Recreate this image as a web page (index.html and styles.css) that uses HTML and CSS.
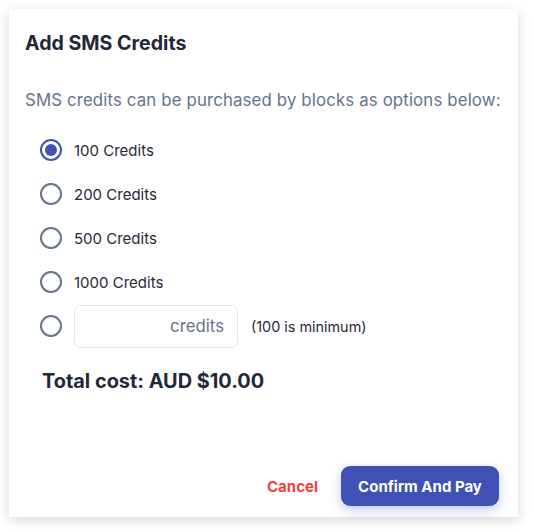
FILE: index.html
```html
<!DOCTYPE html>
<html>
<head>
<meta charset="utf-8">
<link rel="stylesheet" href="styles.css">
</head>
<body>
<div class="card">
  <h1 class="title">Add SMS Credits</h1>
  <p class="desc">SMS credits can be purchased by blocks as options below:</p>
  <div class="options">
    <label class="option"><span class="radio checked"></span><span class="lbl">100 Credits</span></label>
    <label class="option"><span class="radio"></span><span class="lbl">200 Credits</span></label>
    <label class="option"><span class="radio"></span><span class="lbl">500 Credits</span></label>
    <label class="option"><span class="radio"></span><span class="lbl">1000 Credits</span></label>
    <div class="option"><span class="radio"></span><span class="input">credits</span><span class="hint">(100 is minimum)</span></div>
  </div>
  <div class="total">Total cost: AUD $10.00</div>
  <div class="actions">
    <button class="cancel">Cancel</button>
    <button class="confirm">Confirm And Pay</button>
  </div>
</div>
</body>
</html>
```
FILE: styles.css
```css
html, body { margin: 0; padding: 0; background: #ffffff; }
body { padding: 9px 16px 15px 9px; font-family: "Inter", "Roboto", sans-serif; color: #1f2937; }
.card {
  width: 509px; height: 508px; box-sizing: border-box;
  background: #fff;
  box-shadow: 0 3px 12px rgba(0,0,0,0.16);
  padding: 0 16px 0 16px;
  display: flex; flex-direction: column;
}
.title { margin: 22px 0 0 0; font-size: 19.6px; font-weight: 700; line-height: 24px; color: #1f2937; }
.desc { margin: 33px 0 0 0; font-size: 16.8px; line-height: 24px; color: #64748b; letter-spacing: 0.15px; }
.options { margin-top: 16px; padding-left: 15px; display: flex; flex-direction: column; }
.option { height: 44px; display: flex; align-items: center; }
.radio {
  width: 22px; height: 22px; box-sizing: border-box; border-radius: 50%;
  border: 2px solid #64748b; flex: none; position: relative; margin-right: 12px;
}
.radio.checked { border-color: #3f51b5; }
.radio.checked::after {
  content: ""; position: absolute; left: 3px; top: 3px; width: 12px; height: 12px; border-radius: 50%; background: #3f51b5;
}
.lbl { font-size: 15px; color: #1f2937; }
.input {
  width: 164px; height: 43px; box-sizing: border-box; border: 1px solid #e2e8f0; border-radius: 7px;
  display: flex; align-items: center; justify-content: flex-end; padding-right: 13px;
  font-size: 16.8px; color: #64748b;
}
.hint { margin-left: 13px; font-size: 14.4px; color: #1f2937; }
.total { margin-top: 20px; padding-left: 17px; font-size: 19.9px; font-weight: 700; line-height: 26px; color: #1f2937; }
.actions { margin-top: auto; margin-bottom: 11px; display: flex; justify-content: flex-end; align-items: center; gap: 0; }
button { font-family: inherit; border: 0; cursor: pointer; }
.cancel { background: none; color: #f43f3f; font-size: 15px; font-weight: 700; padding: 0 23px; height: 40px; }
.confirm {
  background: #3f51b5; color: #fff; font-size: 15px; font-weight: 700; height: 40px; width: 158px;
  border-radius: 9px; box-shadow: 0 4px 12px rgba(63,81,181,0.3); margin-right: 3px;
}
```
